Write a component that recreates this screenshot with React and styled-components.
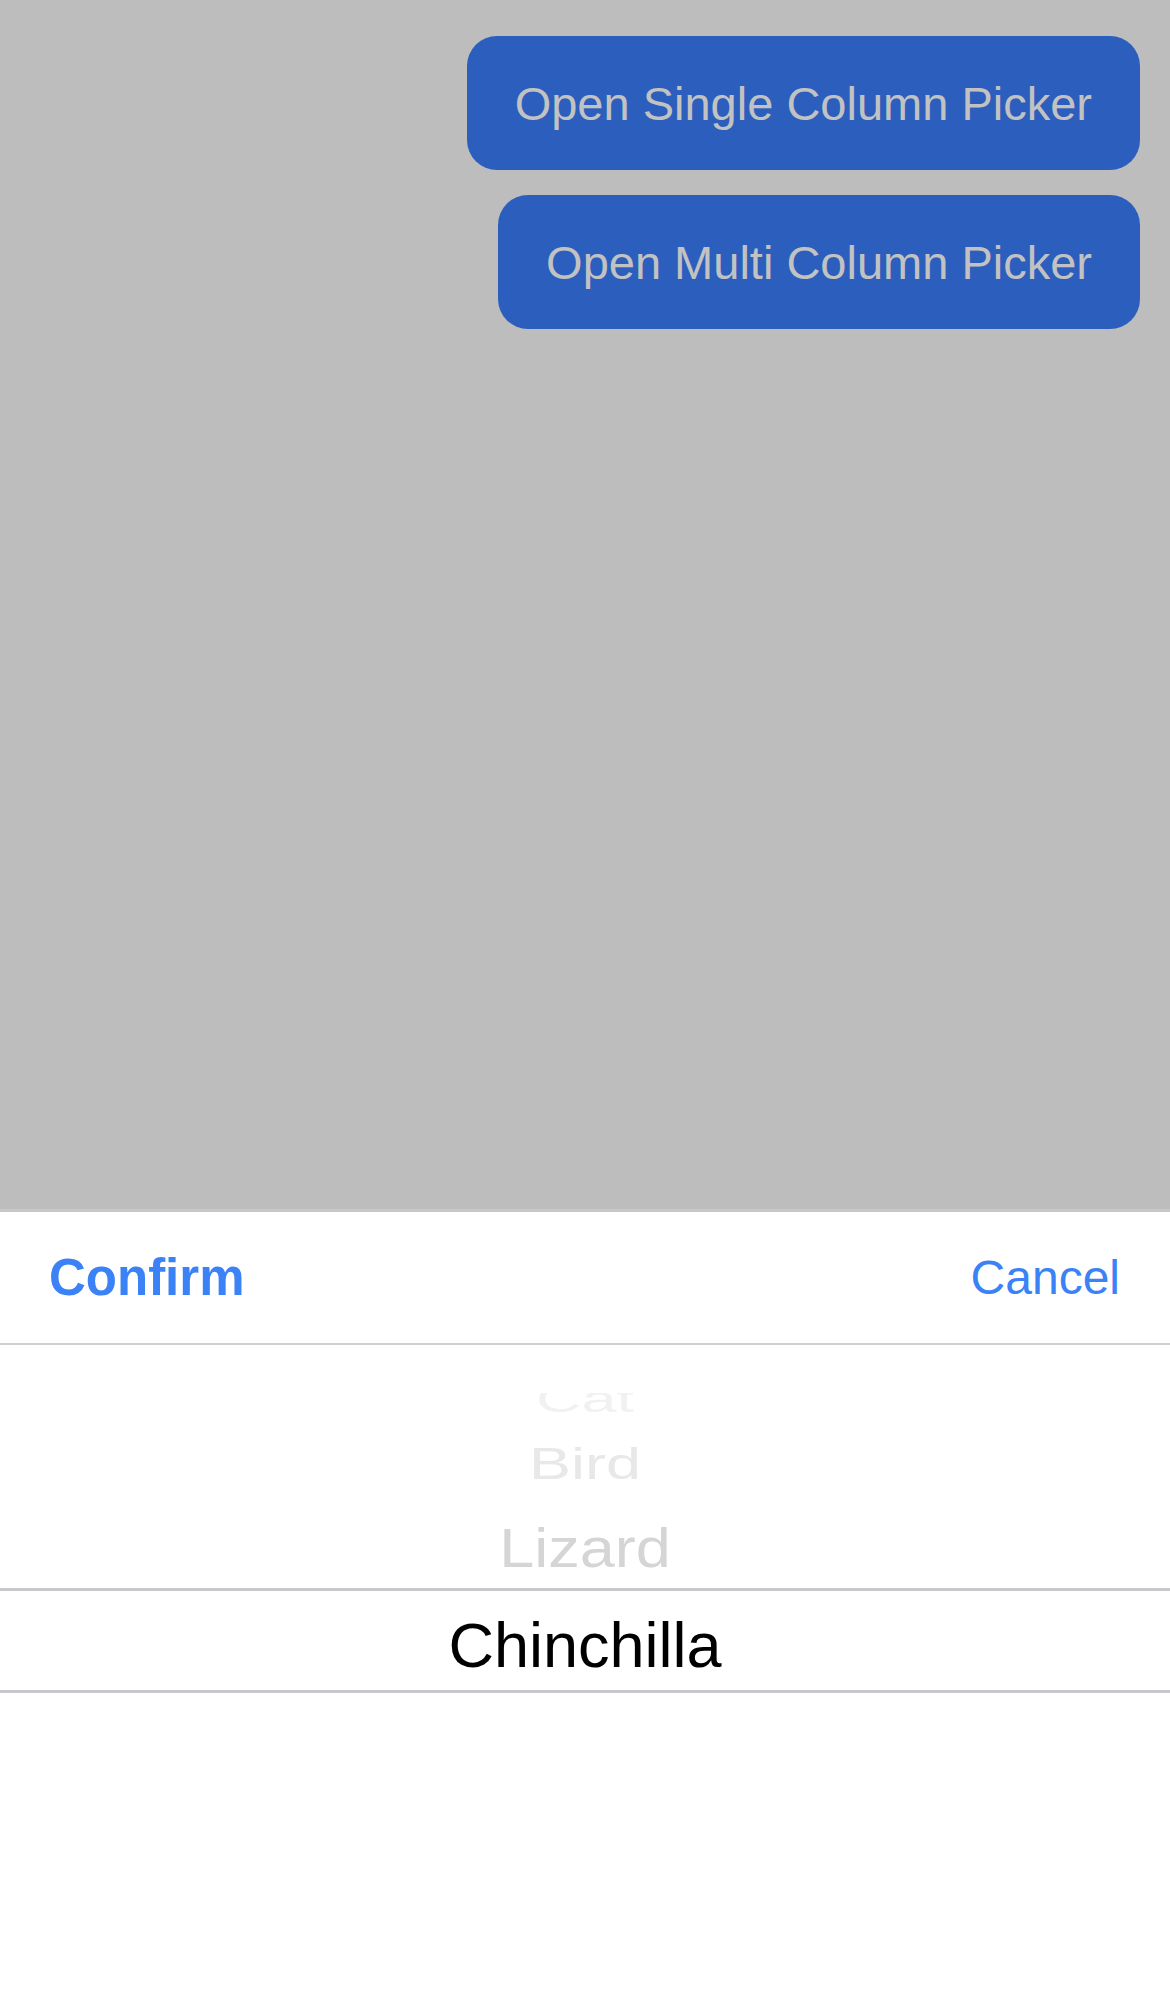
import React from 'react';
import styled, { createGlobalStyle } from 'styled-components';

const GlobalStyle = createGlobalStyle`
  html, body {
    margin: 0;
    padding: 0;
    background: #bdbdbd;
  }
  * {
    box-sizing: border-box;
  }
`;

const Screen = styled.div`
  width: 1170px;
  height: 1992px;
  display: flex;
  flex-direction: column;
  background: #bdbdbd;
  font-family: 'Liberation Sans', Arial, sans-serif;
  overflow: hidden;
`;

const ButtonStack = styled.div`
  display: flex;
  flex-direction: column;
  align-items: flex-end;
  gap: 25px;
  padding: 36px 30px 0;
  flex: 1;
`;

const OpenButton = styled.button`
  height: 134px;
  padding: 0 48px;
  border: none;
  border-radius: 30px;
  background: #2c5fbd;
  color: #c2c2c2;
  font-family: 'Liberation Sans', Arial, sans-serif;
  font-size: 47px;
  line-height: 1;
  cursor: pointer;
`;

const Sheet = styled.div`
  background: #ffffff;
  border-top: 3px solid #c8c7cc;
  display: flex;
  flex-direction: column;
`;

const Toolbar = styled.div`
  height: 133px;
  display: flex;
  align-items: center;
  justify-content: space-between;
  padding: 0 50px 0 49px;
  border-bottom: 2px solid #cfcfd3;
`;

const ToolbarAction = styled.button`
  border: none;
  background: none;
  padding: 0;
  color: #3b82f6;
  font-family: 'Liberation Sans', Arial, sans-serif;
  font-size: ${(p) => (p.$bold ? '51px' : '48px')};
  font-weight: ${(p) => (p.$bold ? 700 : 400)};
  line-height: 1;
  cursor: pointer;
`;

const Wheel = styled.div`
  height: 647px;
  display: flex;
  flex-direction: column;
  padding-top: 34px;
`;

const WheelRow = styled.div`
  height: ${(p) => p.$h}px;
  display: flex;
  align-items: center;
  justify-content: center;
  clip-path: inset(${(p) => p.$clip || 0}px 0 0 0);
`;

const SelectedRow = styled.div`
  height: 105px;
  display: flex;
  align-items: center;
  justify-content: center;
  padding-top: 9px;
  border-top: 3px solid #c8c7cc;
  border-bottom: 3px solid #c8c7cc;
`;

const ItemLabel = styled.span`
  font-family: 'Liberation Sans', Arial, sans-serif;
  font-size: 63px;
  line-height: 1;
  color: ${(p) => p.$color || '#000000'};
  transform: scaleY(${(p) => p.$scale || 1});
  white-space: nowrap;
`;

const fadedItems = [
  { label: 'Cat', h: 41, scale: 0.6, color: '#f1f1f1', clip: 14 },
  { label: 'Bird', h: 86, scale: 0.71, color: '#e8e8e8' },
  { label: 'Lizard', h: 82, scale: 0.89, color: '#d5d5d5' },
];

export default function App() {
  return (
    <>
      <GlobalStyle />
      <Screen>
        <ButtonStack>
          <OpenButton>Open Single Column Picker</OpenButton>
          <OpenButton>Open Multi Column Picker</OpenButton>
        </ButtonStack>
        <Sheet>
          <Toolbar>
            <ToolbarAction $bold>Confirm</ToolbarAction>
            <ToolbarAction>Cancel</ToolbarAction>
          </Toolbar>
          <Wheel>
            {fadedItems.map((item) => (
              <WheelRow key={item.label} $h={item.h} $clip={item.clip}>
                <ItemLabel $scale={item.scale} $color={item.color}>
                  {item.label}
                </ItemLabel>
              </WheelRow>
            ))}
            <SelectedRow>
              <ItemLabel>Chinchilla</ItemLabel>
            </SelectedRow>
          </Wheel>
        </Sheet>
      </Screen>
    </>
  );
}
